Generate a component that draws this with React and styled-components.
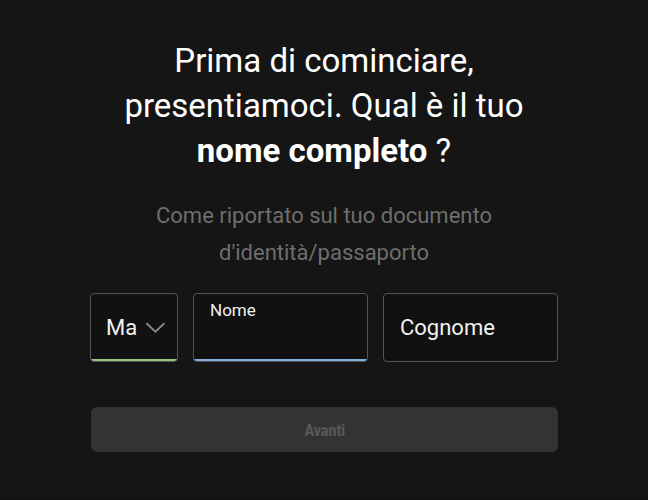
import React from "react";
import styled, { createGlobalStyle } from "styled-components";

const Global = createGlobalStyle`
  html, body { margin: 0; padding: 0; background: #151515; }
  body { font-family: Roboto, "Noto Sans", sans-serif; }
  * { box-sizing: border-box; }
`;

const Page = styled.div`
  width: 648px;
  height: 500px;
  background: #151515;
  display: flex;
  flex-direction: column;
  align-items: center;
  padding-top: 38px;
`;

const Title = styled.h1`
  margin: 0;
  width: 440px;
  text-align: center;
  color: #ffffff;
  font-family: Roboto, sans-serif;
  font-weight: 400;
  font-size: 33px;
  line-height: 45px;
  strong { font-weight: 700; }
`;

const Subtitle = styled.p`
  margin: 24px 0 0;
  width: 380px;
  text-align: center;
  color: #6e6e6e;
  font-family: Roboto, sans-serif;
  font-size: 22px;
  line-height: 37px;
`;

const Row = styled.div`
  margin-top: 22px;
  display: flex;
  gap: 15px;
  width: 468px;
`;

const Field = styled.div`
  position: relative;
  width: ${(p) => p.$w}px;
  height: 69px;
  background: #111111;
  border: 1px solid #545454;
  border-radius: 4px;
  display: flex;
  align-items: center;
  overflow: hidden;
  &::after {
    content: "";
    display: ${(p) => (p.$accent ? "block" : "none")};
    position: absolute;
    left: -1px;
    right: -1px;
    bottom: -1px;
    height: 3px;
    background: ${(p) => p.$accent};
  }
`;

const SelectField = styled(Field)`
  padding: 0 11px 0 15px;
  gap: 8px;
`;

const Value = styled.span`
  color: #f2f2f2;
  font-size: 22px;
  font-family: Roboto, sans-serif;
`;

const Placeholder = styled.span`
  color: #f2f2f2;
  font-size: 22px;
  font-family: Roboto, sans-serif;
  padding-left: 16px;
`;

const FloatLabel = styled.span`
  position: absolute;
  left: 16px;
  top: 6px;
  color: #f0f0f0;
  font-size: 17px;
  font-family: Roboto, sans-serif;
`;

const Button = styled.button`
  margin-top: 45px;
  width: 467px;
  height: 45px;
  margin-left: 1px;
  border: none;
  border-radius: 6px;
  background: #333333;
  color: #575757;
  font-family: "Roboto Condensed", Roboto, sans-serif;
  font-weight: 700;
  font-size: 17px;
  letter-spacing: -0.4px;
`;

const Chevron = () => (
  <svg width="22" height="14" viewBox="0 0 22 14" fill="none">
    <path d="M1.5 2 L11 11 L20.5 2" stroke="#8a8a8a" strokeWidth="2" />
  </svg>
);

export default function App() {
  return (
    <Page>
      <Global />
      <Title>
        Prima di cominciare, presentiamoci. Qual è il tuo <strong>nome completo</strong> ?
      </Title>
      <Subtitle>Come riportato sul tuo documento d'identità/passaporto</Subtitle>
      <Row>
        <SelectField $w={88} $accent="#8fc97a">
          <Value>Ma</Value>
          <Chevron />
        </SelectField>
        <Field $w={175} $accent="#7fb0e0">
          <FloatLabel>Nome</FloatLabel>
        </Field>
        <Field $w={175}>
          <Placeholder>Cognome</Placeholder>
        </Field>
      </Row>
      <Button disabled>Avanti</Button>
    </Page>
  );
}
